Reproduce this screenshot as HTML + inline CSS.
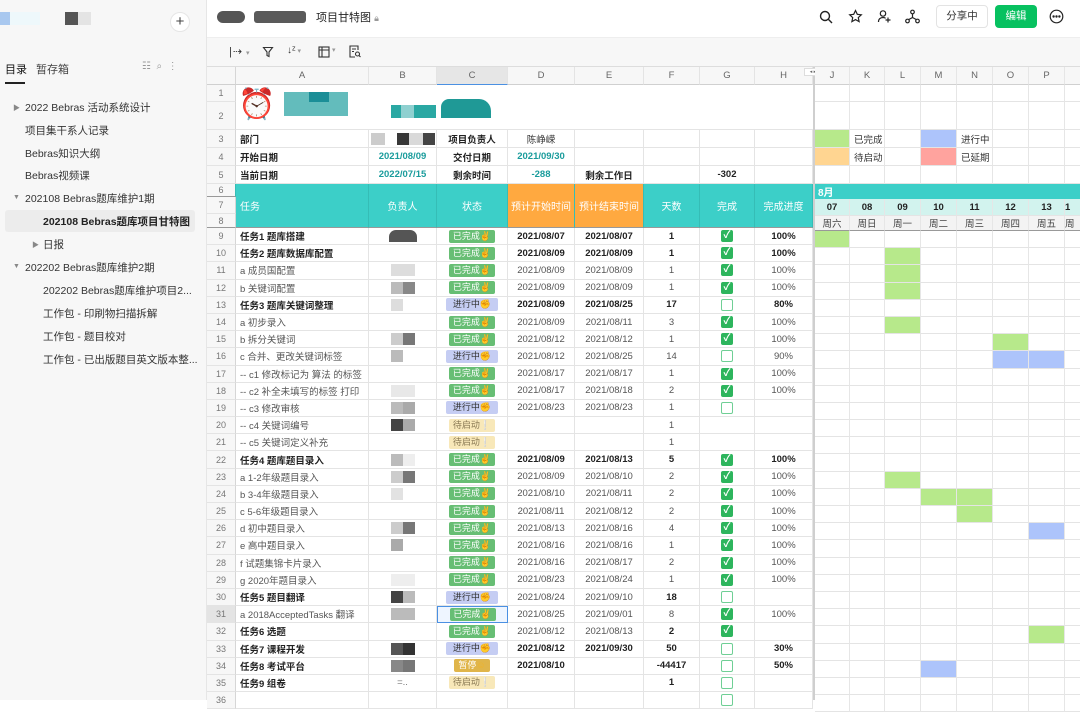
<!DOCTYPE html>
<html><head><meta charset="utf-8"><style>
*{box-sizing:border-box;margin:0;padding:0}
body{width:1080px;height:700px;overflow:hidden;background:#fff;font-family:"Liberation Sans","Noto Sans CJK SC",sans-serif;color:#222;position:relative}
.side{position:absolute;left:0;top:0;width:207px;height:700px;background:#f7f7f7;border-right:1px solid #e6e6e6}
.side .it{position:absolute;font-size:10.5px;color:#333;white-space:nowrap}
.tri{position:absolute;font-size:7px;color:#888}
.top{position:absolute;left:207px;top:0;right:0;height:38px;background:#fff;border-bottom:1px solid #eee}
.tool{position:absolute;left:207px;top:38px;right:0;height:29px;background:#f7f7f7;border-bottom:1px solid #ddd}
table{border-collapse:separate;border-spacing:0;table-layout:fixed;position:absolute}
td{border-right:1px solid #e4e4e4;border-bottom:1px solid #e4e4e4;font-size:9.5px;white-space:nowrap;overflow:hidden;text-align:center;vertical-align:middle;padding:0}
td.rh{background:#f7f7f7;color:#777;font-size:9px;border-right:1px solid #d6d6d6}
tr.ch td{background:#f7f7f7;color:#666;font-size:9.5px;border-bottom:1px solid #d0d0d0}
td.a{text-align:left;padding-left:4px}
.b td{font-weight:bold}
.b td.rh{font-weight:normal}
.g{color:#555}
.st{display:inline-block;width:46px;height:13px;line-height:13px;border-radius:2px;font-size:9px;font-weight:normal!important;text-align:center}
.dn{background:#67be74;color:#fff}
.pr{background:#c5cdf3;color:#333;width:52px}
.wt{background:#f8e8b9;color:#8a7a55}
.ps{background:#e0b54a;color:#fff}
.em{color:#f0b429}
.cb{display:inline-block;width:12px;height:12px;border-radius:2px;vertical-align:middle}
.ck{background:#2db55d;color:#fff;font-size:10px;line-height:12px;font-weight:bold}
.uc{border:1.3px solid #6fcf95;background:#fff}
.th td{background:#3ccfc8;color:#fff;font-size:10px;border-right:1px solid #35bdb6;border-bottom:1px solid #999}
.th td.o{background:#ffa940}
.teal{color:#1a9c9c;font-weight:bold}
.blk{display:inline-block;height:12px;vertical-align:middle}
.gt td{border-right:1px solid #e6e6e6}
.gr{background:#b7e98b}.bl{background:#adc4fb}.or{background:#ffd591}.rd{background:#ffa39e}
</style></head><body>

<div class="side">
  <div style="position:absolute;left:0;top:12px;width:10px;height:13px;background:#a9c8ef"></div>
  <div style="position:absolute;left:10px;top:12px;width:30px;height:13px;background:#eef8fb"></div>
  <div style="position:absolute;left:65px;top:12px;width:13px;height:13px;background:#555"></div>
  <div style="position:absolute;left:78px;top:12px;width:13px;height:13px;background:#e4e4e4"></div>
  <div style="position:absolute;left:170px;top:12px;width:20px;height:20px;border-radius:50%;background:#fff;border:1px solid #e6e6e6;text-align:center;line-height:17px;font-size:15px;color:#444">+</div>
  <div class="it" style="left:5px;top:61px;font-size:11px;color:#111">目录</div>
  <div class="it" style="left:36px;top:61px;font-size:11px;color:#444">暂存箱</div>
  <div style="position:absolute;left:5px;top:82px;width:20px;height:1.5px;background:#222"></div>
  <div class="it" style="left:142px;top:61px;color:#999;font-size:10px">☷ &nbsp;⌕ &nbsp;⋮</div>
  <div class="tri" style="left:13px;top:103px">▶</div><div class="it" style="left:25px;top:100px">2022 Bebras 活动系统设计</div>
  <div class="it" style="left:25px;top:123px">项目集干系人记录</div>
  <div class="it" style="left:25px;top:146px">Bebras知识大纲</div>
  <div class="it" style="left:25px;top:168px">Bebras视频课</div>
  <div class="tri" style="left:13px;top:194px">▼</div><div class="it" style="left:25px;top:191px">202108 Bebras题库维护1期</div>
  <div style="position:absolute;left:5px;top:210px;width:190px;height:22px;background:#ececec;border-radius:3px"></div>
  <div class="it" style="left:43px;top:214px;font-weight:bold;color:#222">202108 Bebras题库项目甘特图</div>
  <div class="tri" style="left:32px;top:240px">▶</div><div class="it" style="left:43px;top:237px">日报</div>
  <div class="tri" style="left:13px;top:263px">▼</div><div class="it" style="left:25px;top:260px">202202 Bebras题库维护2期</div>
  <div class="it" style="left:43px;top:283px">202202 Bebras题库维护项目2...</div>
  <div class="it" style="left:43px;top:306px">工作包 - 印刷物扫描拆解</div>
  <div class="it" style="left:43px;top:329px">工作包 - 题目校对</div>
  <div class="it" style="left:43px;top:352px">工作包 - 已出版题目英文版本整...</div>
</div>

<div class="top">
  <div style="position:absolute;left:10px;top:11px;width:28px;height:12px;border-radius:6px;background:#555"></div>
  <div style="position:absolute;left:47px;top:11px;width:52px;height:12px;border-radius:3px;background:#5a5a5a"></div>
  <div style="position:absolute;left:109px;top:9px;font-size:11px;color:#222">项目甘特图 <span style="color:#999;font-size:9px">🔒︎</span></div>
  <svg style="position:absolute;left:612px;top:10px" width="14" height="14" viewBox="0 0 14 14" fill="none" stroke="#222" stroke-width="1.4"><circle cx="6" cy="6" r="4.5"/><path d="M9.3 9.3L13 13"/></svg>
  <svg style="position:absolute;left:641px;top:9px" width="15" height="15" viewBox="0 0 15 15" fill="none" stroke="#222" stroke-width="1.2"><path d="M7.5 1.5l1.8 3.8 4 .5-3 2.8.8 4-3.6-2-3.6 2 .8-4-3-2.8 4-.5z"/></svg>
  <svg style="position:absolute;left:670px;top:9px" width="15" height="15" viewBox="0 0 15 15" fill="none" stroke="#222" stroke-width="1.2"><circle cx="6" cy="4.5" r="2.7"/><path d="M1.5 13c0-3 2-4.5 4.5-4.5 1 0 2 .3 2.6.8M11 8.5v5M8.5 11h5"/></svg>
  <svg style="position:absolute;left:698px;top:9px" width="15" height="15" viewBox="0 0 15 15" fill="none" stroke="#222" stroke-width="1.2"><circle cx="7.5" cy="3" r="1.8"/><circle cx="2.5" cy="12" r="1.8"/><circle cx="12.5" cy="12" r="1.8"/><path d="M7.5 5v3.5L3.6 10.6M7.5 8.5l3.9 2.1"/></svg>
  <div style="position:absolute;left:729px;top:5px;width:52px;height:23px;border:1px solid #e3e3e3;border-radius:4px;font-size:10.5px;line-height:21px;text-align:center;color:#333">分享中</div>
  <div style="position:absolute;left:788px;top:5px;width:42px;height:23px;background:#07c160;border-radius:4px;font-size:10.5px;line-height:23px;text-align:center;color:#fff">编辑</div>
  <svg style="position:absolute;left:842px;top:9px" width="15" height="15" viewBox="0 0 15 15" fill="none" stroke="#222" stroke-width="1.2"><circle cx="7.5" cy="7.5" r="6.3"/><circle cx="4.6" cy="7.5" r=".6" fill="#222"/><circle cx="7.5" cy="7.5" r=".6" fill="#222"/><circle cx="10.4" cy="7.5" r=".6" fill="#222"/></svg>
</div>

<div class="tool">
  <div style="position:absolute;left:22px;top:7px;font-size:11px;color:#333;letter-spacing:1px">|⇢<span style="font-size:7px;color:#999"> ▾</span></div>
  <svg style="position:absolute;left:55px;top:8px" width="12" height="12" viewBox="0 0 12 12" fill="none" stroke="#333" stroke-width="1.1"><path d="M1.5 1.5h9L7 6v4.5L5 9.5V6z"/></svg>
  <div style="position:absolute;left:80px;top:7px;font-size:10px;color:#333">↓ᶻ<span style="font-size:7px;color:#999"> ▾</span></div>
  <svg style="position:absolute;left:111px;top:8px" width="12" height="12" viewBox="0 0 12 12" fill="none" stroke="#333" stroke-width="1.1"><rect x="1" y="1" width="10" height="10"/><path d="M1 4h10M4 1v10"/></svg>
  <div style="position:absolute;left:125px;top:8px;font-size:7px;color:#999">▾</div>
  <svg style="position:absolute;left:142px;top:7px" width="12" height="13" viewBox="0 0 12 13" fill="none" stroke="#333" stroke-width="1.1"><path d="M9 5V1H1v11h5M3 4h4M3 6.5h2"/><circle cx="8.5" cy="9" r="2"/><path d="M10 10.5l1.5 1.5"/></svg>
</div>

<!-- main table -->
<table style="left:207px;top:67px;width:606px">
<colgroup><col style="width:29px"><col style="width:133px"><col style="width:68px"><col style="width:71px"><col style="width:67px"><col style="width:69px"><col style="width:56px"><col style="width:55px"><col style="width:58px"></colgroup>
<tr class="ch" style="height:18px"><td class="rh"></td><td>A</td><td>B</td><td style="background:#e6e6e6;border-bottom:1.5px solid #4a90e2">C</td><td>D</td><td>E</td><td>F</td><td>G</td><td>H</td></tr>
<tr style="height:17px"><td class="rh">1</td><td colspan="8" rowspan="2" style="text-align:left;border-right:none;position:relative"><span style="position:absolute;left:2px;top:0;font-size:30px;line-height:40px;color:#d33">⏰</span>
<div style="position:absolute;left:48px;top:7px;width:64px;height:24px;background:#2fa5a5;opacity:.75"></div>
<div style="position:absolute;left:73px;top:7px;width:20px;height:10px;background:#1b8e97"></div>
<div style="position:absolute;left:155px;top:20px;width:45px;height:13px;background:#2aa8a3"></div>
<div style="position:absolute;left:165px;top:20px;width:13px;height:13px;background:#8fd0d0"></div>
<div style="position:absolute;left:205px;top:14px;width:50px;height:19px;background:#1f9996;border-radius:8px 12px 0 0"></div>
</td></tr>
<tr style="height:28px"><td class="rh">2</td></tr>
<tr style="height:18px"><td class="rh">3</td><td class="a" style="font-weight:bold">部门</td><td style="position:relative"><span class="blk" style="width:14px;background:#ccc;margin-right:12px"></span><span class="blk" style="width:12px;background:#383838"></span><span class="blk" style="width:14px;background:#d9d9d9"></span><span class="blk" style="width:12px;background:#444"></span></td><td style="font-weight:bold">项目负责人</td><td style="color:#333">陈峥嵘</td><td></td><td></td><td></td><td></td></tr>
<tr style="height:18px"><td class="rh">4</td><td class="a" style="font-weight:bold">开始日期</td><td class="teal">2021/08/09</td><td style="font-weight:bold">交付日期</td><td class="teal">2021/09/30</td><td></td><td></td><td></td><td></td></tr>
<tr style="height:18px"><td class="rh">5</td><td class="a" style="font-weight:bold">当前日期</td><td class="teal">2022/07/15</td><td style="font-weight:bold">剩余时间</td><td class="teal">-288</td><td style="font-weight:bold">剩余工作日</td><td></td><td style="font-weight:bold">-302</td><td></td></tr>
<tr class="th" style="height:13px"><td class="rh" style="background:#f7f7f7;color:#777;font-size:9px">6</td><td class="a" rowspan="3" style="padding-left:4px">任务</td><td rowspan="3">负责人</td><td rowspan="3">状态</td><td class="o" rowspan="3">预计开始时间</td><td class="o" rowspan="3">预计结束时间</td><td rowspan="3">天数</td><td rowspan="3">完成</td><td rowspan="3">完成进度</td></tr>
<tr style="height:17px"><td class="rh">7</td></tr>
<tr style="height:14px"><td class="rh" style="border-bottom:1px solid #999">8</td></tr>

<tr class="b" style="height:17.2px"><td class="rh">9</td><td class="a">任务1 题库搭建</td><td><span class="blk" style="width:28px;background:#555;border-radius:7px 7px 0 0"></span></td><td><span class="st dn">已完成<span class="em">✌</span></span></td><td>2021/08/07</td><td>2021/08/07</td><td>1</td><td><span class="cb ck">✓</span></td><td>100%</td></tr>
<tr class="b" style="height:17.2px"><td class="rh">10</td><td class="a">任务2 题库数据库配置</td><td></td><td><span class="st dn">已完成<span class="em">✌</span></span></td><td>2021/08/09</td><td>2021/08/09</td><td>1</td><td><span class="cb ck">✓</span></td><td>100%</td></tr>
<tr class="g" style="height:17.2px"><td class="rh">11</td><td class="a">a 成员国配置</td><td><span class="blk" style="width:24px;background:#ddd"></span></td><td><span class="st dn">已完成<span class="em">✌</span></span></td><td>2021/08/09</td><td>2021/08/09</td><td>1</td><td><span class="cb ck">✓</span></td><td>100%</td></tr>
<tr class="g" style="height:17.2px"><td class="rh">12</td><td class="a">b 关键词配置</td><td><span class="blk" style="width:12px;background:#bbb"></span><span class="blk" style="width:12px;background:#888"></span></td><td><span class="st dn">已完成<span class="em">✌</span></span></td><td>2021/08/09</td><td>2021/08/09</td><td>1</td><td><span class="cb ck">✓</span></td><td>100%</td></tr>
<tr class="b" style="height:17.2px"><td class="rh">13</td><td class="a">任务3 题库关键词整理</td><td><span class="blk" style="width:12px;background:#ddd;margin-right:12px"></span></td><td><span class="st pr">进行中<span class="em">✊</span></span></td><td>2021/08/09</td><td>2021/08/25</td><td>17</td><td><span class="cb uc"></span></td><td>80%</td></tr>
<tr class="g" style="height:17.2px"><td class="rh">14</td><td class="a">a 初步录入</td><td></td><td><span class="st dn">已完成<span class="em">✌</span></span></td><td>2021/08/09</td><td>2021/08/11</td><td>3</td><td><span class="cb ck">✓</span></td><td>100%</td></tr>
<tr class="g" style="height:17.2px"><td class="rh">15</td><td class="a">b 拆分关键词</td><td><span class="blk" style="width:12px;background:#ccc"></span><span class="blk" style="width:12px;background:#777"></span></td><td><span class="st dn">已完成<span class="em">✌</span></span></td><td>2021/08/12</td><td>2021/08/12</td><td>1</td><td><span class="cb ck">✓</span></td><td>100%</td></tr>
<tr class="g" style="height:17.2px"><td class="rh">16</td><td class="a">c 合并、更改关键词标签</td><td><span class="blk" style="width:12px;background:#bbb;margin-right:12px"></span></td><td><span class="st pr">进行中<span class="em">✊</span></span></td><td>2021/08/12</td><td>2021/08/25</td><td>14</td><td><span class="cb uc"></span></td><td>90%</td></tr>
<tr class="g" style="height:17.2px"><td class="rh">17</td><td class="a">-- c1 修改标记为 算法 的标签</td><td></td><td><span class="st dn">已完成<span class="em">✌</span></span></td><td>2021/08/17</td><td>2021/08/17</td><td>1</td><td><span class="cb ck">✓</span></td><td>100%</td></tr>
<tr class="g" style="height:17.2px"><td class="rh">18</td><td class="a">-- c2 补全未填写的标签 打印</td><td><span class="blk" style="width:24px;background:#e8e8e8"></span></td><td><span class="st dn">已完成<span class="em">✌</span></span></td><td>2021/08/17</td><td>2021/08/18</td><td>2</td><td><span class="cb ck">✓</span></td><td>100%</td></tr>
<tr class="g" style="height:17.2px"><td class="rh">19</td><td class="a">-- c3 修改审核</td><td><span class="blk" style="width:12px;background:#bbb"></span><span class="blk" style="width:12px;background:#aaa"></span></td><td><span class="st pr">进行中<span class="em">✊</span></span></td><td>2021/08/23</td><td>2021/08/23</td><td>1</td><td><span class="cb uc"></span></td><td></td></tr>
<tr class="g" style="height:17.2px"><td class="rh">20</td><td class="a">-- c4 关键词编号</td><td><span class="blk" style="width:12px;background:#444"></span><span class="blk" style="width:12px;background:#aaa"></span></td><td><span class="st wt">待启动<span class="em">❕</span></span></td><td></td><td></td><td>1</td><td></td><td></td></tr>
<tr class="g" style="height:17.2px"><td class="rh">21</td><td class="a">-- c5 关键词定义补充</td><td></td><td><span class="st wt">待启动<span class="em">❕</span></span></td><td></td><td></td><td>1</td><td></td><td></td></tr>
<tr class="b" style="height:17.2px"><td class="rh">22</td><td class="a">任务4 题库题目录入</td><td><span class="blk" style="width:12px;background:#bbb"></span><span class="blk" style="width:12px;background:#eee"></span></td><td><span class="st dn">已完成<span class="em">✌</span></span></td><td>2021/08/09</td><td>2021/08/13</td><td>5</td><td><span class="cb ck">✓</span></td><td>100%</td></tr>
<tr class="g" style="height:17.2px"><td class="rh">23</td><td class="a">a 1-2年级题目录入</td><td><span class="blk" style="width:12px;background:#ccc"></span><span class="blk" style="width:12px;background:#777"></span></td><td><span class="st dn">已完成<span class="em">✌</span></span></td><td>2021/08/09</td><td>2021/08/10</td><td>2</td><td><span class="cb ck">✓</span></td><td>100%</td></tr>
<tr class="g" style="height:17.2px"><td class="rh">24</td><td class="a">b 3-4年级题目录入</td><td><span class="blk" style="width:12px;background:#e2e2e2;margin-right:12px"></span></td><td><span class="st dn">已完成<span class="em">✌</span></span></td><td>2021/08/10</td><td>2021/08/11</td><td>2</td><td><span class="cb ck">✓</span></td><td>100%</td></tr>
<tr class="g" style="height:17.2px"><td class="rh">25</td><td class="a">c 5-6年级题目录入</td><td></td><td><span class="st dn">已完成<span class="em">✌</span></span></td><td>2021/08/11</td><td>2021/08/12</td><td>2</td><td><span class="cb ck">✓</span></td><td>100%</td></tr>
<tr class="g" style="height:17.2px"><td class="rh">26</td><td class="a">d 初中题目录入</td><td><span class="blk" style="width:12px;background:#ccc"></span><span class="blk" style="width:12px;background:#777"></span></td><td><span class="st dn">已完成<span class="em">✌</span></span></td><td>2021/08/13</td><td>2021/08/16</td><td>4</td><td><span class="cb ck">✓</span></td><td>100%</td></tr>
<tr class="g" style="height:17.2px"><td class="rh">27</td><td class="a">e 高中题目录入</td><td><span class="blk" style="width:12px;background:#aaa;margin-right:12px"></span></td><td><span class="st dn">已完成<span class="em">✌</span></span></td><td>2021/08/16</td><td>2021/08/16</td><td>1</td><td><span class="cb ck">✓</span></td><td>100%</td></tr>
<tr class="g" style="height:17.2px"><td class="rh">28</td><td class="a">f 试题集锦卡片录入</td><td></td><td><span class="st dn">已完成<span class="em">✌</span></span></td><td>2021/08/16</td><td>2021/08/17</td><td>2</td><td><span class="cb ck">✓</span></td><td>100%</td></tr>
<tr class="g" style="height:17.2px"><td class="rh">29</td><td class="a">g 2020年题目录入</td><td><span class="blk" style="width:24px;background:#eee"></span></td><td><span class="st dn">已完成<span class="em">✌</span></span></td><td>2021/08/23</td><td>2021/08/24</td><td>1</td><td><span class="cb ck">✓</span></td><td>100%</td></tr>
<tr style="height:17.2px"><td class="rh">30</td><td class="a" style="font-weight:bold">任务5 题目翻译</td><td><span class="blk" style="width:12px;background:#444"></span><span class="blk" style="width:12px;background:#bbb"></span></td><td><span class="st pr">进行中<span class="em">✊</span></span></td><td class="g">2021/08/24</td><td class="g">2021/09/10</td><td style="font-weight:bold">18</td><td><span class="cb uc"></span></td><td></td></tr>
<tr class="g" style="height:17.2px"><td class="rh" style="background:#e4e4e4">31</td><td class="a">a 2018AcceptedTasks 翻译</td><td><span class="blk" style="width:12px;background:#bbb"></span><span class="blk" style="width:12px;background:#bbb"></span></td><td style="border:1.5px solid #4a90e2;background:#eef5ff"><span class="st dn">已完成<span class="em">✌</span></span></td><td>2021/08/25</td><td>2021/09/01</td><td>8</td><td><span class="cb ck">✓</span></td><td>100%</td></tr>
<tr style="height:17.2px"><td class="rh">32</td><td class="a" style="font-weight:bold">任务6 选题</td><td></td><td><span class="st dn">已完成<span class="em">✌</span></span></td><td class="g">2021/08/12</td><td class="g">2021/08/13</td><td style="font-weight:bold">2</td><td><span class="cb ck">✓</span></td><td></td></tr>
<tr class="b" style="height:17.2px"><td class="rh">33</td><td class="a">任务7 课程开发</td><td><span class="blk" style="width:12px;background:#555"></span><span class="blk" style="width:12px;background:#333"></span></td><td><span class="st pr">进行中<span class="em">✊</span></span></td><td>2021/08/12</td><td>2021/09/30</td><td>50</td><td><span class="cb uc"></span></td><td>30%</td></tr>
<tr class="b" style="height:17.2px"><td class="rh">34</td><td class="a">任务8 考试平台</td><td><span class="blk" style="width:12px;background:#888"></span><span class="blk" style="width:12px;background:#777"></span></td><td><span class="st ps" style="width:36px">暂停<span class="em">☺</span></span></td><td>2021/08/10</td><td></td><td>-44417</td><td><span class="cb uc"></span></td><td>50%</td></tr>
<tr class="b" style="height:17.2px"><td class="rh">35</td><td class="a">任务9 组卷</td><td style="font-weight:normal;color:#777">=..</td><td><span class="st wt">待启动<span class="em">❕</span></span></td><td></td><td></td><td>1</td><td><span class="cb uc"></span></td><td></td></tr>
<tr style="height:17.2px"><td class="rh">36</td><td></td><td></td><td></td><td></td><td></td><td></td><td><span class="cb uc"></span></td><td></td></tr>
</table>

<div style="position:absolute;left:813px;top:67px;width:2px;height:633px;background:#cfcfcf"></div>
<div style="position:absolute;left:804px;top:68px;width:18px;height:8px;background:#fff;border:1px solid #ddd;font-size:5px;color:#666;line-height:6px;text-align:center">◂ ▸</div>

<!-- gantt -->
<table class="gt" style="left:815px;top:67px;width:290px">
<colgroup><col style="width:35px"><col style="width:35px"><col style="width:36px"><col style="width:36px"><col style="width:36px"><col style="width:36px"><col style="width:36px"><col style="width:40px"></colgroup>
<tr class="ch" style="height:18px"><td>J</td><td>K</td><td>L</td><td>M</td><td>N</td><td>O</td><td>P</td><td></td></tr>
<tr style="height:17px"><td></td><td></td><td></td><td></td><td></td><td></td><td></td><td></td></tr>
<tr style="height:28px"><td></td><td></td><td></td><td></td><td></td><td></td><td></td><td></td></tr>
<tr style="height:18px"><td class="gr"></td><td class="a" style="color:#333">已完成</td><td></td><td class="bl"></td><td class="a" style="color:#333">进行中</td><td></td><td></td><td></td></tr>
<tr style="height:18px"><td class="or"></td><td class="a" style="color:#333">待启动</td><td></td><td class="rd"></td><td class="a" style="color:#333">已延期</td><td></td><td></td><td></td></tr>
<tr style="height:18px"><td></td><td></td><td></td><td></td><td></td><td></td><td></td><td></td></tr>
<tr style="height:13px"><td colspan="8" style="background:#3ccfc8;color:#fff;font-weight:bold;text-align:left;padding-left:3px;font-size:10px;border:none">8月</td></tr>
<tr style="height:17px;font-weight:bold"><td style="background:#d2f3ee;font-weight:bold">07</td><td style="background:#d2f3ee;font-weight:bold">08</td><td style="background:#d2f3ee;font-weight:bold">09</td><td style="background:#d2f3ee;font-weight:bold">10</td><td style="background:#d2f3ee;font-weight:bold">11</td><td style="background:#d2f3ee;font-weight:bold">12</td><td style="background:#d2f3ee;font-weight:bold">13</td><td style="background:#d2f3ee;font-weight:bold;text-align:left">1</td></tr>
<tr style="height:14px"><td style="background:#f3f3f3;color:#444;border-bottom:1px solid #999">周六</td><td style="background:#f3f3f3;color:#444;border-bottom:1px solid #999">周日</td><td style="background:#f3f3f3;color:#444;border-bottom:1px solid #999">周一</td><td style="background:#f3f3f3;color:#444;border-bottom:1px solid #999">周二</td><td style="background:#f3f3f3;color:#444;border-bottom:1px solid #999">周三</td><td style="background:#f3f3f3;color:#444;border-bottom:1px solid #999">周四</td><td style="background:#f3f3f3;color:#444;border-bottom:1px solid #999">周五</td><td style="background:#f3f3f3;color:#444;border-bottom:1px solid #999;text-align:left">周</td></tr>
<tr style="height:17.2px"><td class="gr"></td><td></td><td></td><td></td><td></td><td></td><td></td><td></td></tr>
<tr style="height:17.2px"><td></td><td></td><td class="gr"></td><td></td><td></td><td></td><td></td><td></td></tr>
<tr style="height:17.2px"><td></td><td></td><td class="gr"></td><td></td><td></td><td></td><td></td><td></td></tr>
<tr style="height:17.2px"><td></td><td></td><td class="gr"></td><td></td><td></td><td></td><td></td><td></td></tr>
<tr style="height:17.2px"><td></td><td></td><td></td><td></td><td></td><td></td><td></td><td></td></tr>
<tr style="height:17.2px"><td></td><td></td><td class="gr"></td><td></td><td></td><td></td><td></td><td></td></tr>
<tr style="height:17.2px"><td></td><td></td><td></td><td></td><td></td><td class="gr"></td><td></td><td></td></tr>
<tr style="height:17.2px"><td></td><td></td><td></td><td></td><td></td><td class="bl"></td><td class="bl"></td><td></td></tr>
<tr style="height:17.2px"><td></td><td></td><td></td><td></td><td></td><td></td><td></td><td></td></tr>
<tr style="height:17.2px"><td></td><td></td><td></td><td></td><td></td><td></td><td></td><td></td></tr>
<tr style="height:17.2px"><td></td><td></td><td></td><td></td><td></td><td></td><td></td><td></td></tr>
<tr style="height:17.2px"><td></td><td></td><td></td><td></td><td></td><td></td><td></td><td></td></tr>
<tr style="height:17.2px"><td></td><td></td><td></td><td></td><td></td><td></td><td></td><td></td></tr>
<tr style="height:17.2px"><td></td><td></td><td></td><td></td><td></td><td></td><td></td><td></td></tr>
<tr style="height:17.2px"><td></td><td></td><td class="gr"></td><td></td><td></td><td></td><td></td><td></td></tr>
<tr style="height:17.2px"><td></td><td></td><td></td><td class="gr"></td><td class="gr"></td><td></td><td></td><td></td></tr>
<tr style="height:17.2px"><td></td><td></td><td></td><td></td><td class="gr"></td><td></td><td></td><td></td></tr>
<tr style="height:17.2px"><td></td><td></td><td></td><td></td><td></td><td></td><td class="bl"></td><td></td></tr>
<tr style="height:17.2px"><td></td><td></td><td></td><td></td><td></td><td></td><td></td><td></td></tr>
<tr style="height:17.2px"><td></td><td></td><td></td><td></td><td></td><td></td><td></td><td></td></tr>
<tr style="height:17.2px"><td></td><td></td><td></td><td></td><td></td><td></td><td></td><td></td></tr>
<tr style="height:17.2px"><td></td><td></td><td></td><td></td><td></td><td></td><td></td><td></td></tr>
<tr style="height:17.2px"><td></td><td></td><td></td><td></td><td></td><td></td><td></td><td></td></tr>
<tr style="height:17.2px"><td></td><td></td><td></td><td></td><td></td><td></td><td class="gr"></td><td></td></tr>
<tr style="height:17.2px"><td></td><td></td><td></td><td></td><td></td><td></td><td></td><td></td></tr>
<tr style="height:17.2px"><td></td><td></td><td></td><td class="bl"></td><td></td><td></td><td></td><td></td></tr>
<tr style="height:17.2px"><td></td><td></td><td></td><td></td><td></td><td></td><td></td><td></td></tr>
<tr style="height:17.2px"><td></td><td></td><td></td><td></td><td></td><td></td><td></td><td></td></tr>
</table>
</body></html>
